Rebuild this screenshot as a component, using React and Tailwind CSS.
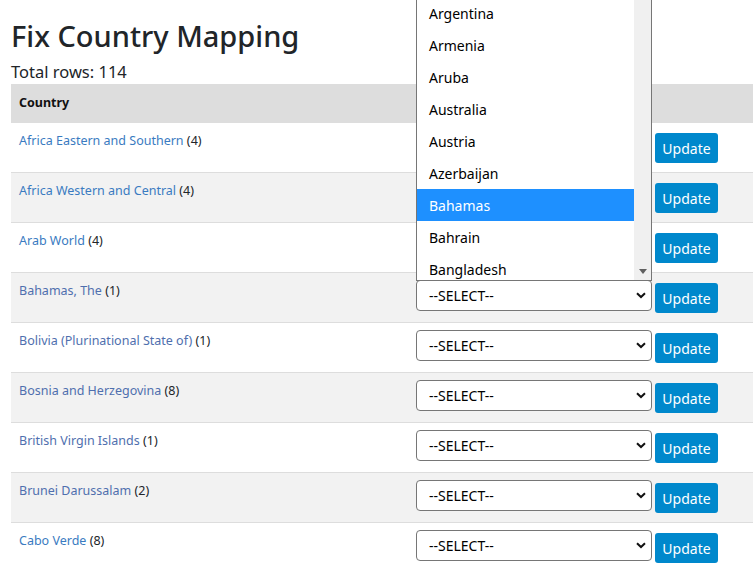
import React from "react";

const rows = [
  { name: "Africa Eastern and Southern", n: 4, visited: false },
  { name: "Africa Western and Central", n: 4, visited: false },
  { name: "Arab World", n: 4, visited: false },
  { name: "Bahamas, The", n: 1, visited: true },
  { name: "Bolivia (Plurinational State of)", n: 1, visited: true },
  { name: "Bosnia and Herzegovina", n: 8, visited: true },
  { name: "British Virgin Islands", n: 1, visited: true },
  { name: "Brunei Darussalam", n: 2, visited: true },
  { name: "Cabo Verde", n: 8, visited: false },
];

const options = [
  "Argentina",
  "Armenia",
  "Aruba",
  "Australia",
  "Austria",
  "Azerbaijan",
  "Bahamas",
  "Bahrain",
  "Bangladesh",
];

function FakeSelect({ hidden }) {
  return (
    <div
      className={
        "relative w-[236px] h-[31px] bg-white border border-[#767676] rounded-[4px] flex items-center pl-[12px] text-[14px] text-black " +
        (hidden ? "invisible" : "")
      }
    >
      <span>--SELECT--</span>
      <svg
        className="absolute right-[5px] top-[11px]"
        width="10"
        height="7"
        viewBox="0 0 10 7"
      >
        <polyline
          points="1,1.2 5,5 9,1.2"
          fill="none"
          stroke="#111"
          strokeWidth="2"
        />
      </svg>
    </div>
  );
}

function Dropdown() {
  return (
    <div className="absolute left-[416px] top-0 w-[236px] h-[281px] bg-white border-l border-r border-b border-[#767676] overflow-hidden flex">
      <div className="flex-1 overflow-hidden">
        <div className="-mt-[3px] flex flex-col">
          {options.map((o) => (
            <div
              key={o}
              className={
                "h-[32px] shrink-0 flex items-center pl-[12px] text-[14px] " +
                (o === "Bahamas" ? "bg-[#1e90ff] text-white" : "text-black")
              }
            >
              {o}
            </div>
          ))}
        </div>
      </div>
      <div className="w-[17px] bg-[#f0f0f0] flex flex-col justify-end items-center pb-[6px]">
        <svg width="8" height="5" viewBox="0 0 8 5">
          <polygon points="0,0 8,0 4,5" fill="#606060" />
        </svg>
      </div>
    </div>
  );
}

export default function App() {
  return (
    <div className="relative w-[753px] h-[573px] overflow-hidden bg-white font-['Segoe_UI','Noto_Sans',sans-serif] text-[#212529]">
      <div className="pl-[11px]">
        <h1 className="text-[29px] font-medium leading-[36px] pt-[18px] text-[#212529]">
          Fix Country Mapping
        </h1>
        <p className="text-[16.5px] leading-[24px] mt-[6px]">Total rows: 114</p>
        <div className="w-[742px]">
          <div className="flex h-[38px] bg-[#dddddd] items-center">
            <div className="w-[397px] px-[8px] text-[12.5px] font-bold text-[#111]">
              Country
            </div>
          </div>
          {rows.map((r, i) => (
            <div
              key={r.name}
              className={
                "flex h-[50px] border-t border-[#dddddd] " +
                (i % 2 === 1 ? "bg-[#f2f2f2]" : "bg-white")
              }
            >
              <div className="w-[397px] px-[8px] pt-[8px] text-[12.5px] leading-[20px]">
                <a
                  href="#"
                  className={r.visited ? "text-[#4f6fae]" : "text-[#3a7bc1]"}
                >
                  {r.name}
                </a>{" "}
                <span className="text-[#212529]">({r.n})</span>
              </div>
              <div className="flex items-start pl-[8px]">
                <div className="mt-[7px]">
                  <FakeSelect hidden={i < 3} />
                </div>
                <button className="ml-[3px] mt-[10px] w-[63px] h-[30px] bg-[#0088cc] text-white text-[14px] rounded-[3px]">
                  Update
                </button>
              </div>
            </div>
          ))}
        </div>
      </div>
      <Dropdown />
    </div>
  );
}
